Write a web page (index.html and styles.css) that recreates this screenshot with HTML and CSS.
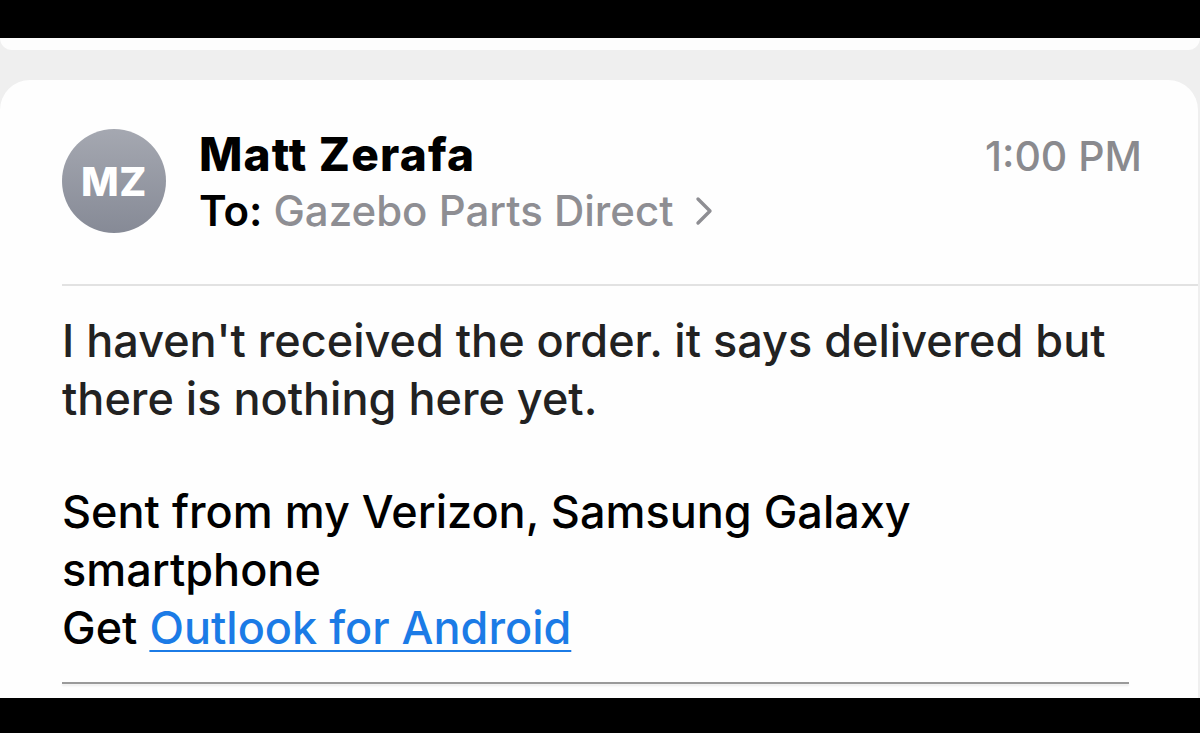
FILE: index.html
```html
<!DOCTYPE html>
<html lang="en">
<head>
<meta charset="utf-8">
<title>Mail</title>
<link rel="stylesheet" href="styles.css">
</head>
<body>
<div class="screen">
  <div class="bar-top"></div>
  <div class="prev-card"></div>
  <div class="card">
    <div class="header">
      <div class="avatar">MZ</div>
      <div class="meta">
        <div class="row1">
          <span class="name">Matt Zerafa</span>
          <span class="time">1:00 PM</span>
        </div>
        <div class="row2">
          <span class="to-label">To:</span>
          <span class="to-name">Gazebo Parts Direct</span>
          <svg class="chev" width="18" height="30" viewBox="0 0 18 30"><path d="M3 3 L15 15 L3 27" fill="none" stroke="#8e8e93" stroke-width="3.4" stroke-linecap="round" stroke-linejoin="round"/></svg>
        </div>
      </div>
    </div>
    <div class="sep"></div>
    <div class="body">
      <p class="p1">I haven't received the order. it says delivered but there is nothing here yet.</p>
      <p class="p2">Sent from my Verizon, Samsung Galaxy smartphone<br>Get <a class="link" href="#">Outlook for Android</a></p>
    </div>
    <div class="rule"></div>
  </div>
  <div class="bar-bottom"></div>
</div>
</body>
</html>
```
FILE: styles.css
```css
html, body {
  margin: 0;
  padding: 0;
  background: #000;
}
body {
  font-family: Inter, "Noto Sans", "Liberation Sans", sans-serif;
}
.screen {
  width: 1200px;
  height: 733px;
  display: flex;
  flex-direction: column;
  background: #efefef;
  overflow: hidden;
}
.bar-top {
  height: 38px;
  background: #000;
  flex: none;
}
.prev-card {
  height: 12px;
  flex: none;
  background: #fdfdfd;
  border-radius: 0 0 22px 22px;
  margin: 0 0 30px 0;
}
.card {
  flex: 1;
  background: #fefefe;
  border-radius: 30px 30px 0 0;
  margin-right: 2px;
  padding: 0 0 0 62px;
  display: flex;
  flex-direction: column;
}
.header {
  display: flex;
  align-items: flex-start;
  padding-top: 49px;
  height: 204px;
  box-sizing: border-box;
  flex: none;
}
.avatar {
  width: 104px;
  height: 104px;
  border-radius: 50%;
  background: linear-gradient(180deg, #a5a8b1 0%, #868a96 100%);
  color: #fff;
  font-weight: 800;
  font-size: 40px;
  display: flex;
  align-items: center;
  justify-content: center;
  letter-spacing: 0.5px;
  flex: none;
}
.meta {
  flex: 1;
  margin-left: 33px;
  padding-right: 56px;
}
.row1 {
  display: flex;
  justify-content: space-between;
  align-items: baseline;
  height: 50px;
  line-height: 50px;
}
.name {
  font-weight: 800;
  font-size: 46px;
  color: #000;
  letter-spacing: 1.2px;
}
.time {
  font-size: 41px;
  color: #8a8a8e;
  font-weight: 500;
}
.row2 {
  display: flex;
  align-items: center;
  height: 54px;
  line-height: 54px;
  margin-top: 5px;
  font-size: 42px;
}
.to-label {
  color: #000;
  font-weight: 600;
  margin-right: 11px;
}
.to-name {
  color: #8e8e93;
  font-weight: 500;
}
.chev {
  margin-left: 21px;
}
.sep {
  height: 2px;
  background: #e2e2e2;
  flex: none;
}
.body {
  padding-top: 26px;
  padding-right: 76px;
  font-size: 45px;
  line-height: 58px;
  font-weight: 500;
}
.body p {
  margin: 0;
}
.p1 {
  color: #222;
  margin-bottom: 55px !important;
}
.p2 {
  color: #000;
}
.link {
  color: #1b7be6;
  text-decoration: underline;
  text-decoration-thickness: 2px;
  text-underline-offset: 6px;
}
.rule {
  margin-top: 25px;
  height: 2px;
  width: 1067px;
  background: #9a9a9a;
  box-shadow: 0 2px 2px #ececec;
  flex: none;
}
.bar-bottom {
  height: 35px;
  background: #000;
  flex: none;
}
```
